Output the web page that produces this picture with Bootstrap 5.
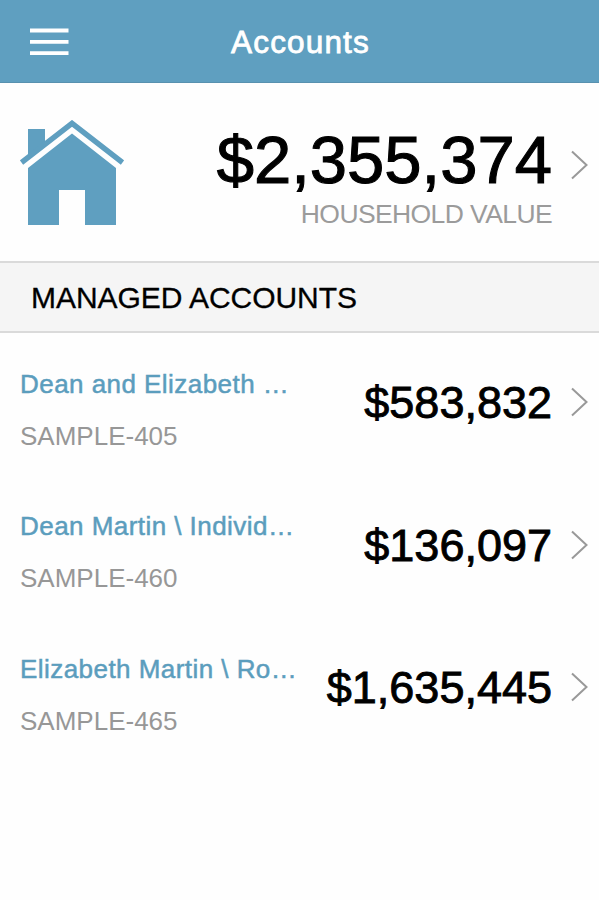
<!DOCTYPE html>
<html lang="en">
<head>
<meta charset="utf-8">
<meta name="viewport" content="width=device-width, initial-scale=1">
<title>Accounts</title>
<link href="https://cdn.jsdelivr.net/npm/bootstrap@5.3.0/dist/css/bootstrap.min.css" rel="stylesheet">
<style>
body { font-family: "Liberation Sans", Arial, sans-serif; color: #000; line-height: 1; background: #fefefe; }
.topbar { height: 83px; background: #5f9fc0; border-bottom: 1px solid #5891af; padding: 2px 30px 0; }
.topbar h1 { font-size: 31.5px; line-height: 36px; padding-left: 2px; letter-spacing: 1.15px; -webkit-text-stroke: .8px #fff; }
.menu-btn, .menu-space { width: 39px; }
.household { height: 178px; padding: 2px 11px 0 20px; }
.total { font-size: 67px; line-height: 76px; padding-top: 5px; margin-bottom: 1px; -webkit-text-stroke: 1.1px #000; }
.total-label { font-size: 26.5px; line-height: 30px; letter-spacing: -.6px; color: #9b9b9b; }
.section-title { height: 72px; background: #f5f5f5; border: solid #dadada; border-width: 2px 0; padding: 1px 31px 0; font-size: 30px; letter-spacing: -.05px; -webkit-text-stroke: .3px #000; }
.account { height: 142.5px; padding: 0 11px 4px 20px; }
.account-text { padding-top: 15px; }
.account-name { font-size: 26px; line-height: 30px; letter-spacing: .45px; color: #5b9dbd; margin-bottom: 22px; -webkit-text-stroke: .5px #5b9dbd; }
.account-id { font-size: 26px; line-height: 30px; color: #979797; }
.amount { font-size: 45px; line-height: 52px; padding-top: 2px; -webkit-text-stroke: .9px #000; }
.chevron { width: 17px; height: 30px; margin-left: 19px; }
</style>
</head>
<body>
<header class="topbar d-flex align-items-center justify-content-between">
  <button class="menu-btn btn p-0 border-0 d-flex" aria-label="Menu">
    <svg width="39" height="28" viewBox="0 0 39 28"><path d="M0 2.500h38.500M0 13.800h38.500M0 25.200h38.500" stroke="#fff" stroke-width="3.800"/></svg>
  </button>
  <h1 class="mb-0 fw-normal text-white">Accounts</h1>
  <span class="menu-space"></span>
</header>
<main>
  <section class="household d-flex align-items-center">
    <svg class="flex-shrink-0" width="104" height="106" viewBox="0 0 104 106" fill="#5f9fc0">
      <path d="M8 36V9h17v14z"/>
      <path d="M8 48 52 13.500 96 48v57H65V70H39v35H8z"/>
      <path d="M1.500 42.500 52 3.300 102.500 42.500" fill="none" stroke="#5f9fc0" stroke-width="5.400"/>
    </svg>
    <div class="ms-auto text-end">
      <div class="total">$2,355,374</div>
      <div class="total-label">HOUSEHOLD VALUE</div>
    </div>
    <svg class="chevron flex-shrink-0 mb-3" viewBox="0 0 17 30" fill="none" stroke="#999" stroke-width="2"><path d="M1 1.500 15.500 15 1 28.500"/></svg>
  </section>
  <h2 class="section-title d-flex align-items-center m-0 fw-normal">MANAGED ACCOUNTS</h2>
  <section>
    <div class="account d-flex align-items-center">
      <div class="account-text"><div class="account-name">Dean and Elizabeth …</div><div class="account-id">SAMPLE-405</div></div>
      <div class="amount ms-auto">$583,832</div>
      <svg class="chevron" viewBox="0 0 17 30" fill="none" stroke="#999" stroke-width="2"><path d="M1 1.500 15.500 15 1 28.500"/></svg>
    </div>
    <div class="account d-flex align-items-center">
      <div class="account-text"><div class="account-name">Dean Martin \ Individ…</div><div class="account-id">SAMPLE-460</div></div>
      <div class="amount ms-auto">$136,097</div>
      <svg class="chevron" viewBox="0 0 17 30" fill="none" stroke="#999" stroke-width="2"><path d="M1 1.500 15.500 15 1 28.500"/></svg>
    </div>
    <div class="account d-flex align-items-center">
      <div class="account-text"><div class="account-name">Elizabeth Martin \ Ro…</div><div class="account-id">SAMPLE-465</div></div>
      <div class="amount ms-auto">$1,635,445</div>
      <svg class="chevron" viewBox="0 0 17 30" fill="none" stroke="#999" stroke-width="2"><path d="M1 1.500 15.500 15 1 28.500"/></svg>
    </div>
  </section>
</main>
<script src="https://cdn.jsdelivr.net/npm/bootstrap@5.3.0/dist/js/bootstrap.bundle.min.js"></script>
</body>
</html>
